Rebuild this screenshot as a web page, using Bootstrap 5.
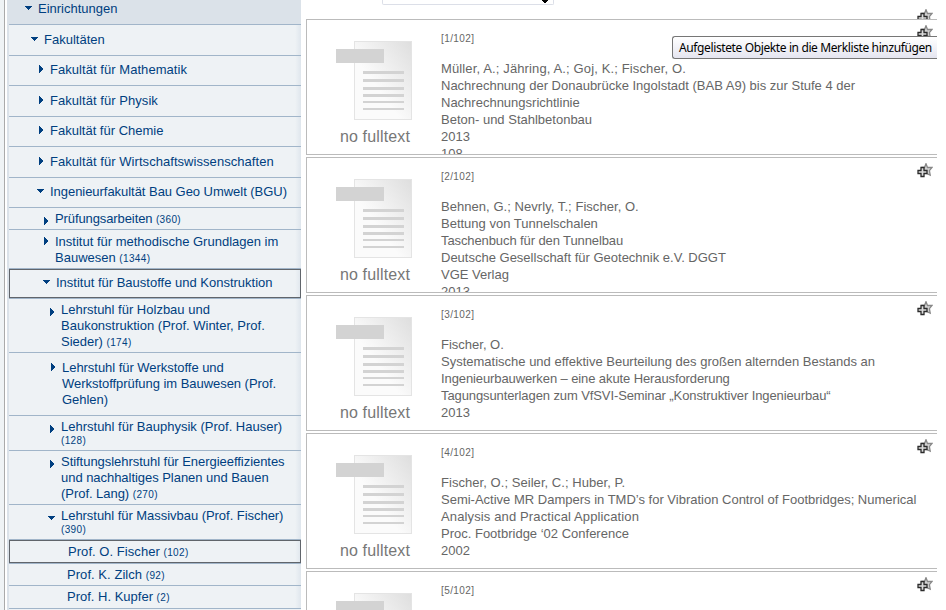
<!DOCTYPE html>
<html lang="de">
<head>
<meta charset="utf-8">
<title>Einrichtungen</title>
<link href="https://cdn.jsdelivr.net/npm/bootstrap@5.3.0/dist/css/bootstrap.min.css" rel="stylesheet">
<style>
body{font:13px/16px "Liberation Sans",Arial,sans-serif;height:610px;background:#fff}
.page{height:610px}
.edge{width:5px;background:#eff3f5;border-right:1px solid #aaa}
.tree{width:294px;margin-left:2px;border-left:2px solid #dbe2e9;color:#003f80;background:#eef2f5}
.tree .node{border-bottom:1px solid #a1b5c9;background:linear-gradient(90deg,#eef2f5 98%,#dfe6ed);white-space:nowrap;align-items:flex-start;height:31px;padding-top:7px}
.tree .h30{height:30px;padding-top:6px}
.tree .root{height:25px;padding-top:1px;background:#dbe2e9}
.tree .h22{height:22px;padding-top:3px}
.tree .h23{height:23px;padding-top:3px}
.tree .h35{height:35px;padding-top:3px}
.tree .h39{height:39px;padding-top:4px}
.tree .h54{height:54px;padding-top:3px}
.tree .h63{height:63px;padding-top:7px}
.tree .picked{height:30px;padding-top:6px;box-shadow:inset 0 0 0 1px #60656b}
.tree .picked.leaf{height:24px;padding-top:4px}
.tree svg{width:8px;height:8px;margin-top:3px;margin-right:5px;fill:#003f80;flex:none}
.tree .low svg{margin-top:6px}
.l0{padding-left:16px}.l1{padding-left:22px}.l2{padding-left:28px}.l3{padding-left:33px}.l3b{padding-left:34px}
.l4{padding-left:39px}.l4b{padding-left:40px}.leaf{padding-left:58px}.leaf.picked{padding-left:59px}
.cnt{font-size:10px;letter-spacing:.35px}
.tight .cnt{display:block;line-height:12px}
.wider{letter-spacing:.05px}
.widest{letter-spacing:.13px}
.narrow{letter-spacing:-.04px}
.narrower{letter-spacing:-.1px}
.results{width:631px;margin-left:5px;color:#666;overflow:hidden}
.topbar{height:19px}
.topbar .picker{width:172px;height:5px;margin-left:76px;border:1px solid #dcdfe8;border-top:0;border-radius:0 0 2px 2px}
.picker svg{display:block;margin-left:158px}
.hit{height:136px;border:1px solid #bbb;border-right:0;margin-bottom:2px;overflow:hidden;line-height:17px;flex:none}
.thumb{width:78px;margin:21px 0 0 29px;flex:none;font-size:16px;line-height:18px;letter-spacing:.15px;color:#777;text-align:center;white-space:nowrap}
.thumb svg{display:block;width:78px;height:80px;margin-bottom:7px}
.info{margin:10px 0 0 27px;white-space:nowrap}
.idx{font-size:10px;letter-spacing:.4px;margin-bottom:13px}
.star{width:16px;height:15px;margin:5px 4px 0 auto;flex:none}
.topstar{height:10px;overflow:hidden;margin:9px 4px 0 auto;width:16px}
.topstar svg{display:block}
.hint{position:absolute;left:672px;top:36px;width:265px;height:23px;border:1px solid #767676;border-right:0;border-radius:3px 0 0 3px;background:linear-gradient(#fff,#e5e5f0);font:12px/22px "Noto Sans","Open Sans",sans-serif;letter-spacing:-.38px;color:#000;padding-left:6px;white-space:nowrap;box-sizing:border-box;overflow:hidden}
</style>
<script src="https://cdn.jsdelivr.net/npm/bootstrap@5.3.0/dist/js/bootstrap.bundle.min.js"></script>
</head>
<body class="overflow-hidden">
<svg class="position-absolute" width="0" height="0">
<symbol id="dn" viewBox="0 0 8 8"><path d="M0 2h7v1H6v1H5v1H4v1H3V5H2V4H1V3H0z"/></symbol>
<symbol id="rt" viewBox="0 0 8 8"><path d="M2 0h1v1h1v1h1v1h1v2H5v1H4v1H3v1H2z"/></symbol>
<linearGradient id="pg" x1="0" y1="1" x2="1" y2="0"><stop offset=".4" stop-color="#fbfbfb"/><stop offset="1" stop-color="#dedede"/></linearGradient>
<symbol id="doc" viewBox="0 0 78 80"><rect x="18.500" y=".5" width="57" height="78" fill="url(#pg)" stroke="#e4e4e4"/><path fill="#d3d3d3" d="M0 8h48v14H0zM27 30h41v3H27zM27 38h41v3H27zM27 46h41v3H27zM27 53h41v3H27zM27 60h41v2H27zM27 67h41v2H27z"/></symbol>
<symbol id="st" viewBox="0 0 16 15"><path d="M9 .7l1.500 3.800H15l-2.600 3.200.8 4.500-3.700-1.700L5 9V4.500h2.500z" fill="#d4d4d4" stroke="#888" stroke-width="1.300"/><path d="M4 4.500h3v3h3v3H7v3H4v-3H1v-3h3z" fill="#ddd" stroke="#2b2b2b" stroke-width="1.300"/></symbol>
</svg>
<div class="page d-flex">
<div class="edge"></div>
<nav class="tree flex-shrink-0">
<div class="node d-flex root l0"><svg><use href="#dn"/></svg><span>Einrichtungen</span></div>
<div class="node d-flex l1"><svg><use href="#dn"/></svg><span>Fakultäten</span></div>
<div class="node d-flex h30 l2"><svg><use href="#rt"/></svg><span class="wider">Fakultät für Mathematik</span></div>
<div class="node d-flex l2"><svg><use href="#rt"/></svg><span class="wider">Fakultät für Physik</span></div>
<div class="node d-flex h30 l2"><svg><use href="#rt"/></svg><span>Fakultät für Chemie</span></div>
<div class="node d-flex l2"><svg><use href="#rt"/></svg><span class="wider">Fakultät für Wirtschaftswissenschaften</span></div>
<div class="node d-flex h30 l2"><svg><use href="#dn"/></svg><span class="narrow">Ingenieurfakultät Bau Geo Umwelt (BGU)</span></div>
<div class="node d-flex h22 low l3"><svg><use href="#rt"/></svg><span class="narrower">Prüfungsarbeiten <span class="cnt">(360)</span></span></div>
<div class="node d-flex h39 l3"><svg><use href="#rt"/></svg><span>Institut für methodische Grundlagen im<br>Bauwesen <span class="cnt">(1344)</span></span></div>
<div class="node d-flex picked l3b"><svg><use href="#dn"/></svg><span>Institut für Baustoffe und Konstruktion</span></div>
<div class="node d-flex h54 low l4"><svg><use href="#rt"/></svg><span>Lehrstuhl für Holzbau und<br>Baukonstruktion (Prof. Winter, Prof.<br>Sieder) <span class="cnt">(174)</span></span></div>
<div class="node d-flex h63 l4b"><svg><use href="#rt"/></svg><span class="narrow">Lehrstuhl für Werkstoffe und<br>Werkstoffprüfung im Bauwesen (Prof.<br>Gehlen)</span></div>
<div class="node d-flex h35 low tight l4"><svg><use href="#rt"/></svg><span>Lehrstuhl für Bauphysik (Prof. Hauser) <span class="cnt">(128)</span></span></div>
<div class="node d-flex h54 low l4"><svg><use href="#rt"/></svg><span class="narrow">Stiftungslehrstuhl für Energieeffizientes<br>und nachhaltiges Planen und Bauen<br>(Prof. Lang) <span class="cnt">(270)</span></span></div>
<div class="node d-flex h35 low tight l4"><svg><use href="#dn"/></svg><span class="narrow">Lehrstuhl für Massivbau (Prof. Fischer) <span class="cnt">(390)</span></span></div>
<div class="node d-flex picked leaf"><span class="wider">Prof. O. Fischer <span class="cnt">(102)</span></span></div>
<div class="node d-flex h22 leaf"><span class="wider">Prof. K. Zilch <span class="cnt">(92)</span></span></div>
<div class="node d-flex h23 leaf"><span>Prof. H. Kupfer <span class="cnt">(2)</span></span></div>
</nav>
<main class="results d-flex flex-column flex-shrink-0">
<div class="topbar d-flex flex-shrink-0"><div class="picker"><svg width="8" height="4"><path d="M1 0h6v1H6v1H5v1H3V2H2V1H1z"/></svg></div><div class="topstar"><svg width="16" height="15"><use href="#st"/></svg></div></div>
<article class="hit d-flex"><div class="thumb"><svg><use href="#doc"/></svg>no fulltext</div><div class="info"><div class="idx">[1/102]</div><span class="widest">Müller, A.; Jähring, A.; Goj, K.; Fischer, O.</span><br>Nachrechnung der Donaubrücke Ingolstadt (BAB A9) bis zur Stufe 4 der<br>Nachrechnungsrichtlinie<br>Beton- und Stahlbetonbau<br>2013<br>108</div><svg class="star"><use href="#st"/></svg></article>
<article class="hit d-flex"><div class="thumb"><svg><use href="#doc"/></svg>no fulltext</div><div class="info"><div class="idx">[2/102]</div><span class="wider">Behnen, G.; Nevrly, T.; Fischer, O.</span><br>Bettung von Tunnelschalen<br><span class="narrower">Taschenbuch für den Tunnelbau</span><br>Deutsche Gesellschaft für Geotechnik e.V. DGGT<br>VGE Verlag<br>2013</div><svg class="star"><use href="#st"/></svg></article>
<article class="hit d-flex"><div class="thumb"><svg><use href="#doc"/></svg>no fulltext</div><div class="info"><div class="idx">[3/102]</div>Fischer, O.<br>Systematische und effektive Beurteilung des großen alternden Bestands an<br><span class="narrower">Ingenieurbauwerken – eine akute Herausforderung</span><br><span class="narrower">Tagungsunterlagen zum VfSVI-Seminar „Konstruktiver Ingenieurbau“</span><br>2013</div><svg class="star"><use href="#st"/></svg></article>
<article class="hit d-flex"><div class="thumb"><svg><use href="#doc"/></svg>no fulltext</div><div class="info"><div class="idx">[4/102]</div><span class="wider">Fischer, O.; Seiler, C.; Huber, P.</span><br>Semi-Active MR Dampers in TMD’s for Vibration Control of Footbridges; Numerical<br><span class="widest">Analysis and Practical Application</span><br>Proc. Footbridge ‘02 Conference<br>2002</div><svg class="star"><use href="#st"/></svg></article>
<article class="hit d-flex"><div class="thumb"><svg><use href="#doc"/></svg></div><div class="info"><div class="idx">[5/102]</div></div><svg class="star"><use href="#st"/></svg></article>
</main>
</div>
<div class="hint" role="tooltip">Aufgelistete Objekte in die Merkliste hinzufügen</div>
</body>
</html>
